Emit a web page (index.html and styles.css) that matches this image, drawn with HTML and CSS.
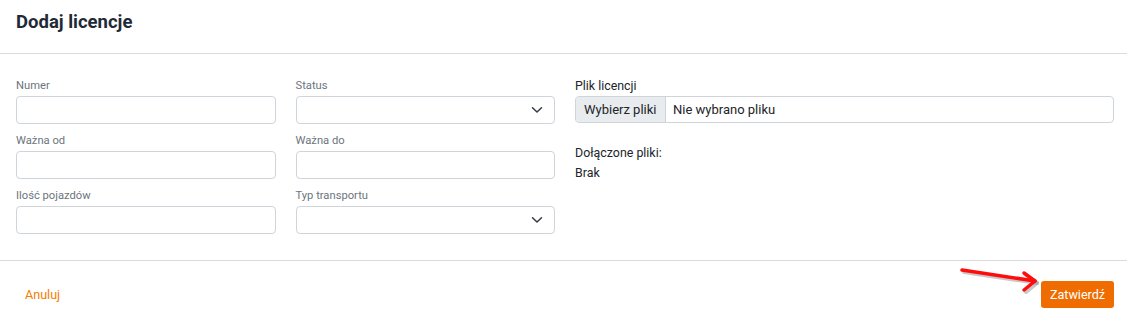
FILE: index.html
```html
<!DOCTYPE html>
<html lang="pl">
<head>
<meta charset="utf-8">
<title>Dodaj licencje</title>
<link rel="stylesheet" href="styles.css">
</head>
<body>
<div class="modal">
  <div class="modal-header">
    <h1 class="modal-title">Dodaj licencje</h1>
  </div>
  <div class="modal-body">
    <div class="fields">
      <div class="field">
        <label class="label">Numer</label>
        <div class="input"></div>
      </div>
      <div class="field">
        <label class="label">Status</label>
        <div class="input select"><svg class="chev" width="12" height="8" viewBox="0 0 12 8"><path d="M1.5 1.8 L6 6 L10.5 1.8" fill="none" stroke="#343a40" stroke-width="1.5" stroke-linecap="round" stroke-linejoin="round"/></svg></div>
      </div>
      <div class="field">
        <label class="label">Ważna od</label>
        <div class="input"></div>
      </div>
      <div class="field">
        <label class="label">Ważna do</label>
        <div class="input"></div>
      </div>
      <div class="field">
        <label class="label">Ilość pojazdów</label>
        <div class="input"></div>
      </div>
      <div class="field">
        <label class="label">Typ transportu</label>
        <div class="input select"><svg class="chev" width="12" height="8" viewBox="0 0 12 8"><path d="M1.5 1.8 L6 6 L10.5 1.8" fill="none" stroke="#343a40" stroke-width="1.5" stroke-linecap="round" stroke-linejoin="round"/></svg></div>
      </div>
    </div>
    <div class="files">
      <label class="file-label">Plik licencji</label>
      <div class="file-input">
        <span class="file-btn">Wybierz pliki</span>
        <span class="file-name">Nie wybrano pliku</span>
      </div>
      <div class="attached">
        <div>Dołączone pliki:</div>
        <div>Brak</div>
      </div>
    </div>
  </div>
  <div class="modal-footer">
    <button class="btn-link">Anuluj</button>
    <button class="btn-primary">Zatwierdź</button>
  </div>
</div>
<svg class="arrow" width="100" height="40" viewBox="0 0 100 40">
  <g transform="translate(2,2)" stroke="#9a9a9a" stroke-opacity="0.55" fill="none" stroke-width="4" stroke-linecap="round" stroke-linejoin="round">
    <path d="M12 12 L85 23"/>
    <path d="M74 15 L85 23 L74 32"/>
  </g>
  <g stroke="#ff0d0d" fill="none" stroke-width="3.5" stroke-linecap="round" stroke-linejoin="round">
    <path d="M12 12 L85 23"/>
    <path d="M74 15 L85 23 L74 32"/>
  </g>
</svg>
</body>
</html>
```
FILE: styles.css
```css
* { box-sizing: border-box; }
html, body { margin: 0; padding: 0; background: #fff; }
body {
  font-family: Roboto, "Liberation Sans", sans-serif;
  color: #212529;
  position: relative;
  width: 1127px;
  height: 324px;
  overflow: hidden;
}
.modal { width: 1127px; }
.modal-header {
  height: 54px;
  padding: 12px 16px 0;
  border-bottom: 1px solid #d9dadf;
}
.modal-title {
  margin: 0;
  font-size: 18.5px;
  line-height: 21px;
  font-weight: 700;
  color: #1f2a37;
}
.modal-body {
  display: grid;
  grid-template-columns: 1fr 1fr;
  column-gap: 20px;
  padding: 22px 13px 26px 16px;
  border-bottom: 1px solid #d9dadf;
}
.fields {
  display: grid;
  grid-template-columns: 1fr 1fr;
  column-gap: 20px;
  row-gap: 7px;
}
.field { display: flex; flex-direction: column; }
.label {
  font-size: 11.2px;
  line-height: 20px;
  color: #6c757d;
}
.input {
  height: 28px;
  border: 1px solid #ced4da;
  border-radius: 4px;
  background: #fff;
}
.select {
  display: flex;
  align-items: center;
  justify-content: flex-end;
  padding-right: 11px;
}
.chev { display: block; }
.files { display: flex; flex-direction: column; }
.file-label {
  font-size: 12.4px;
  line-height: 20px;
  color: #212529;
}
.file-input {
  height: 27px;
  display: flex;
  border: 1px solid #ced4da;
  border-radius: 4px;
  overflow: hidden;
  font-size: 13px;
}
.file-btn {
  display: flex;
  align-items: center;
  width: 90px;
  padding: 0 0 0 8px;
  background: #e9ecef;
  border-right: 1px solid #ced4da;
  color: #212529;
}
.file-name {
  display: flex;
  align-items: center;
  padding-left: 7px;
  color: #212529;
}
.attached {
  margin-top: 20px;
  font-size: 12.4px;
  line-height: 20px;
  color: #212529;
}
.modal-footer {
  display: flex;
  justify-content: space-between;
  align-items: center;
  padding: 20px 13px 16px 16px;
}
.btn-link {
  border: 0;
  background: none;
  font-family: inherit;
  font-size: 12.6px;
  color: #f57c00;
  padding: 0 9px;
  height: 27px;
}
.btn-primary {
  border: 0;
  border-radius: 3px;
  background: #ee6c00;
  color: #fff;
  font-family: inherit;
  font-size: 12.6px;
  height: 27px;
  width: 73px;
  padding: 0;
}
.arrow {
  position: absolute;
  left: 950px;
  top: 258px;
}
```
